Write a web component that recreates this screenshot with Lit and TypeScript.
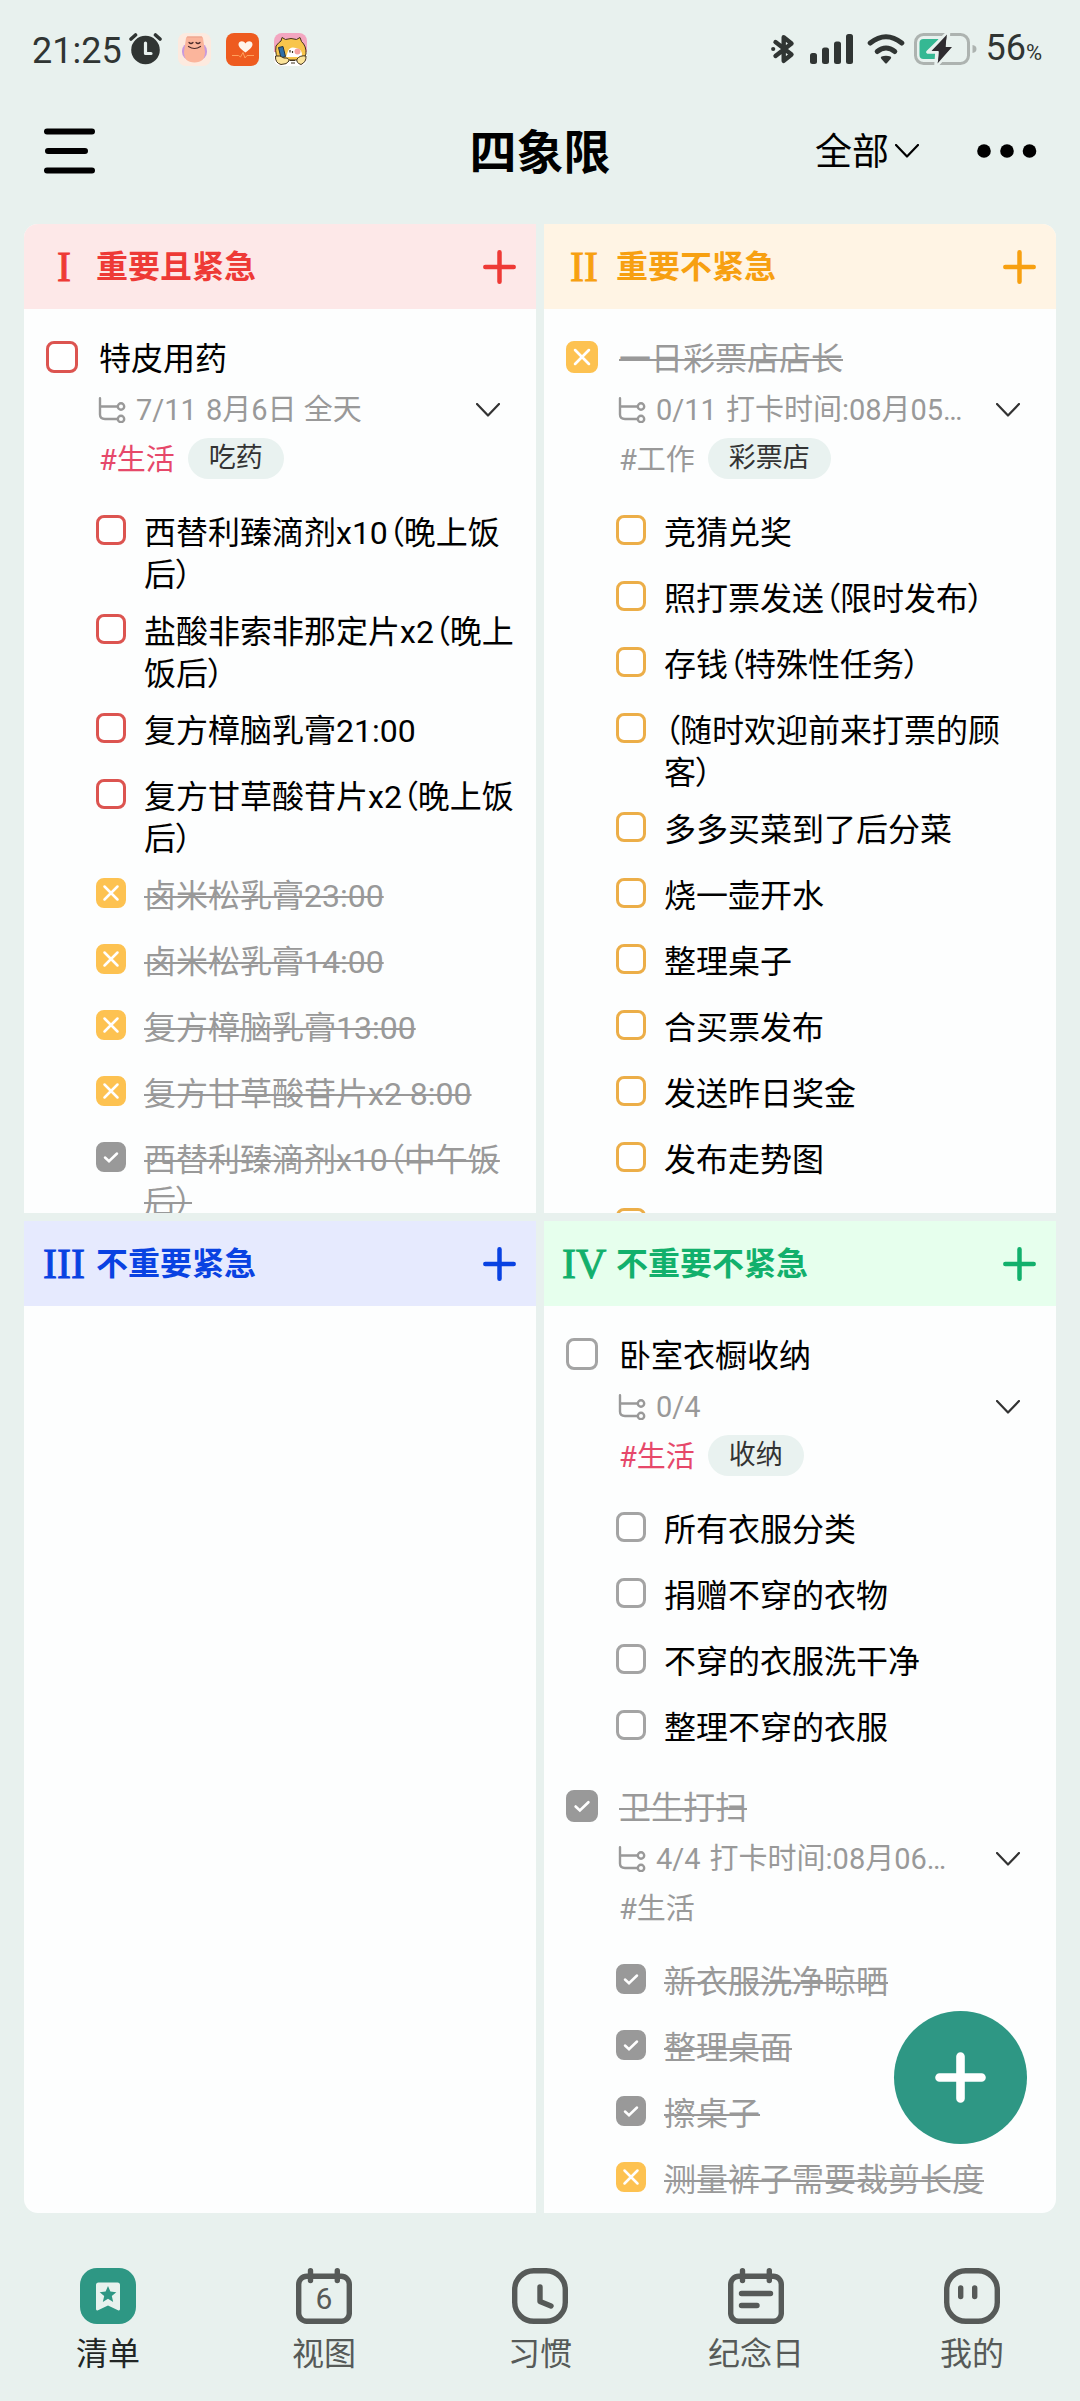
import { LitElement, html, svg, css, nothing } from "lit";
import { customElement, property } from "lit/decorators.js";
import { classMap } from "lit/directives/class-map.js";

type Mark = "open" | "dropped" | "done";

interface Item {
  text: string;
  mark?: Mark;
}

interface Task extends Item {
  count: string;
  when?: string;
  tag: string;
  pill?: string;
  items: Item[];
}

interface Quadrant {
  tone: "red" | "orange" | "blue" | "green";
  numeral: string;
  title: string;
  tasks: Task[];
}

const open = (...texts: string[]): Item[] => texts.map((text) => ({ text }));
const dropped = (...texts: string[]): Item[] => texts.map((text) => ({ text, mark: "dropped" }));
const done = (...texts: string[]): Item[] => texts.map((text) => ({ text, mark: "done" }));

const QUADRANTS: Quadrant[] = [
  {
    tone: "red",
    numeral: "I",
    title: "重要且紧急",
    tasks: [
      {
        text: "特皮用药",
        count: "7/11",
        when: "8月6日 全天",
        tag: "#生活",
        pill: "吃药",
        items: [
          ...open(
            "西替利臻滴剂x10（晚上饭后）",
            "盐酸非索非那定片x2（晚上饭后）",
            "复方樟脑乳膏21:00",
            "复方甘草酸苷片x2（晚上饭后）"
          ),
          ...dropped(
            "卤米松乳膏23:00",
            "卤米松乳膏14:00",
            "复方樟脑乳膏13:00",
            "复方甘草酸苷片x2 8:00"
          ),
          ...done("西替利臻滴剂x10（中午饭后）"),
        ],
      },
    ],
  },
  {
    tone: "orange",
    numeral: "II",
    title: "重要不紧急",
    tasks: [
      {
        text: "一日彩票店店长",
        mark: "dropped",
        count: "0/11",
        when: "打卡时间:08月05…",
        tag: "#工作",
        pill: "彩票店",
        items: open(
          "竞猜兑奖",
          "照打票发送（限时发布）",
          "存钱（特殊性任务）",
          "（随时欢迎前来打票的顾客）",
          "多多买菜到了后分菜",
          "烧一壶开水",
          "整理桌子",
          "合买票发布",
          "发送昨日奖金",
          "发布走势图",
          ""
        ),
      },
    ],
  },
  { tone: "blue", numeral: "III", title: "不重要紧急", tasks: [] },
  {
    tone: "green",
    numeral: "IV",
    title: "不重要不紧急",
    tasks: [
      {
        text: "卧室衣橱收纳",
        count: "0/4",
        tag: "#生活",
        pill: "收纳",
        items: open("所有衣服分类", "捐赠不穿的衣物", "不穿的衣服洗干净", "整理不穿的衣服"),
      },
      {
        text: "卫生打扫",
        mark: "done",
        count: "4/4",
        when: "打卡时间:08月06…",
        tag: "#生活",
        items: [
          ...done("新衣服洗净晾晒", "整理桌面", "擦桌子"),
          ...dropped("测量裤子需要裁剪长度"),
        ],
      },
    ],
  },
];

const chevron = html`<svg class="icon" width="24" height="14" viewBox="0 0 24 14" aria-hidden="true">
  <path d="M1 1 12 12.500 23 1" fill="none" stroke="currentColor" stroke-width="2.200" stroke-linecap="round" stroke-linejoin="round" />
</svg>`;

const shared = css`
  * {
    box-sizing: border-box;
  }
  button {
    margin: 0;
    padding: 0;
    border: 0;
    background: none;
    color: inherit;
    font: inherit;
    cursor: pointer;
  }
  .icon {
    display: block;
    flex: none;
  }
`;

@customElement("quadrant-panel")
export class QuadrantPanel extends LitElement {
  @property({ attribute: false }) data!: Quadrant;

  static styles = [
    shared,
    css`
      :host {
        display: flex;
        flex-direction: column;
        min-width: 0;
        min-height: 0;
        overflow: hidden;
        background: #fdfefe;
      }
      .red {
        --tone: #ee3a36;
        --tint: #fde8e8;
        --edge: #dc5450;
      }
      .orange {
        --tone: #f7a011;
        --tint: #fff4e4;
        --edge: #ecae48;
      }
      .blue {
        --tone: #0942e2;
        --tint: #e6eafe;
        --edge: #0942e2;
      }
      .green {
        --tone: #12b06c;
        --tint: #e6ffed;
        --edge: #a4a4a4;
      }
      .head {
        display: flex;
        align-items: center;
        flex: none;
        height: 85px;
        padding: 0 20px 0 18px;
        background: var(--tint);
        color: var(--tone);
      }
      .numeral {
        width: 44px;
        margin-right: 10px;
        text-align: center;
        font: 42px/48px "Liberation Serif", serif;
        -webkit-text-stroke: 1px currentColor;
        white-space: nowrap;
      }
      h2 {
        flex: 1;
        margin: 0;
        font-size: 32px;
        line-height: 42px;
        font-weight: 700;
      }
      .body {
        flex: 1;
        min-height: 0;
        overflow: hidden;
        padding: 29px 0 0 22px;
      }
      .task + .task {
        margin-top: 14px;
      }
      .row {
        display: flex;
        align-items: flex-start;
        font-size: 32px;
        line-height: 42px;
        color: #000;
        cursor: pointer;
      }
      .title {
        gap: 21px;
      }
      .box {
        display: grid;
        flex: none;
        width: 30px;
        height: 30px;
        margin-top: 3px;
      }
      .title .box {
        width: 32px;
        height: 32px;
      }
      .box > * {
        grid-area: 1 / 1;
        width: 100%;
        height: 100%;
      }
      input {
        appearance: none;
        margin: 0;
        border: 3px solid var(--edge);
        border-radius: 8px;
        background: #fff;
      }
      .dropped input {
        border-color: #fdc251;
        background: #fdc251;
      }
      .done input {
        border-color: #999;
        background: #999;
      }
      .tick {
        pointer-events: none;
      }
      .dropped .label,
      .done .label {
        color: #999;
        text-decoration: line-through 2px;
      }
      .meta {
        display: flex;
        align-items: center;
        height: 40px;
        margin-top: 10px;
        padding: 0 36px 0 52px;
        font-size: 29px;
        line-height: 40px;
        color: #999;
        white-space: nowrap;
      }
      .count {
        margin: 0 9px 0 10px;
      }
      .when {
        flex: 1;
        min-width: 0;
        overflow: hidden;
        text-overflow: ellipsis;
      }
      .fold {
        display: flex;
        align-items: center;
        height: 40px;
        color: #333;
      }
      .tags {
        display: flex;
        align-items: center;
        gap: 13px;
        height: 41px;
        margin-top: 8px;
        padding-left: 53px;
        font-size: 29px;
        line-height: 41px;
        color: #e6486a;
      }
      .tags.muted {
        color: #999;
      }
      .tag {
        padding-top: 4px;
      }
      .pill {
        padding: 0 21px;
        border-radius: 21px;
        background: #e9f2f0;
        color: #333;
        font-size: 27px;
        line-height: 41px;
      }
      ul {
        margin: 33px 0 0;
        padding: 0 14px 0 50px;
        list-style: none;
      }
      li {
        min-height: 66px;
        padding-bottom: 15px;
      }
      li .row {
        gap: 18px;
      }
      li .label {
        flex: 1;
        font-feature-settings: "palt";
      }
    `,
  ];

  private row(item: Item, title = false) {
    const mark = item.mark ?? "open";
    return html`<label class=${classMap({ row: true, title, [mark]: true })}>
      <span class="box">
        <input type="checkbox" .checked=${mark !== "open"} />
        ${mark === "open"
          ? nothing
          : html`<svg class="tick" viewBox="0 0 30 30" aria-hidden="true">
              <path
                d=${mark === "done" ? "M9 15.500 13 19.200 21 11.500" : "M8.500 8.500 21.500 21.500M21.500 8.500 8.500 21.500"}
                fill="none"
                stroke="#fff"
                stroke-width="2.500"
                stroke-linecap="round"
              />
            </svg>`}
      </span>
      <span class="label">${item.text}</span>
    </label>`;
  }

  private task(task: Task) {
    return html`<article class="task">
      ${this.row(task, true)}
      <div class="meta">
        <svg class="icon" width="28" height="26" viewBox="0 0 28 26" aria-hidden="true">
          <g fill="none" stroke="currentColor" stroke-width="2.400" stroke-linecap="round">
            <path d="M2 1.200V17.500Q2 22 7 22H19.500M2 9.500H19.500" />
            <circle cx="23" cy="9.500" r="3.200" />
            <circle cx="23" cy="22" r="3.200" />
          </g>
        </svg>
        <span class="count">${task.count}</span>
        <span class="when">${task.when ?? nothing}</span>
        <button class="fold" aria-label="折叠">${chevron}</button>
      </div>
      <div class=${classMap({ tags: true, muted: !!task.mark })}>
        <span class="tag">${task.tag}</span>
        ${task.pill ? html`<span class="pill">${task.pill}</span>` : nothing}
      </div>
      <ul>
        ${task.items.map((item) => html`<li>${this.row(item)}</li>`)}
      </ul>
    </article>`;
  }

  render() {
    const { tone, numeral, title, tasks } = this.data;
    return html`
      <header class="head ${tone}">
        <span class="numeral">${numeral}</span>
        <h2>${title}</h2>
        <button aria-label="添加">
          <svg class="icon" width="33" height="34" viewBox="0 0 33 34">
            <path d="M16.500 2.300V31.700M2.300 17H30.700" stroke="currentColor" stroke-width="4.500" stroke-linecap="round" />
          </svg>
        </button>
      </header>
      <div class="body ${tone}">${tasks.map((task) => this.task(task))}</div>
    `;
  }
}

const calendarFrame = svg`
  <rect x="2.700" y="8.200" width="50.600" height="45.100" rx="8" />
  <path d="M14.500 2.700V12.500M41.300 2.700V12.500" />`;

const NAV = [
  {
    label: "清单",
    icon: svg`<rect width="56" height="56" rx="17" fill="#2e9784" />
      <path d="M18.500 14.500H37.500Q40 14.500 40 17V41Q40 43 38 42.200L28 37.500 18 42.200Q16 43 16 41V17Q16 14.500 18.500 14.500Z" fill="#e8f2ee" />
      <path d="M28 18 30.400 23.600 36.300 24.200 31.800 28.100 33.200 34 28 30.800 22.800 34 24.200 28.100 19.700 24.200 25.600 23.600Z" fill="#2e9784" />`,
  },
  {
    label: "视图",
    icon: svg`<g class="line">${calendarFrame}</g>
      <text class="day" x="28" y="41" text-anchor="middle">6</text>`,
  },
  {
    label: "习惯",
    icon: svg`<g class="line"><rect x="2.700" y="2.700" width="50.600" height="50.600" rx="19" />
      <path d="M28 19V33.500L39 38" /></g>`,
  },
  {
    label: "纪念日",
    icon: svg`<g class="line">${calendarFrame}<path d="M13.500 25.500H42.500M13.500 37.500H29" /></g>`,
  },
  {
    label: "我的",
    icon: svg`<g class="line"><rect x="2.700" y="2.700" width="50.600" height="50.600" rx="19" />
      <path d="M16.700 20V28.500M30.700 20V28.500" /></g>`,
  },
];

@customElement("app-root")
export class AppRoot extends LitElement {
  static styles = [
    shared,
    css`
      :host {
        display: flex;
        flex-direction: column;
        height: 100vh;
        background: #e8f1ee;
        color: #000;
        font-family: Roboto, "Noto Sans CJK SC", sans-serif;
      }
      .status {
        display: flex;
        align-items: center;
        justify-content: space-between;
        flex: none;
        height: 98px;
        padding: 0 38px 0 32px;
        color: #303533;
        font-size: 36px;
        line-height: 42px;
      }
      .side {
        display: flex;
        align-items: center;
      }
      .apps {
        display: flex;
        gap: 15px;
        margin-left: 16px;
      }
      .clock,
      .charge {
        padding-top: 3px;
      }
      .clock {
        margin-right: 7px;
      }
      .signal {
        margin: 0 14px 0 15px;
      }
      .battery {
        margin: 0 8px 0 9px;
      }
      .percent {
        font-size: 22px;
      }
      .bar {
        display: grid;
        grid-template-columns: 1fr auto 1fr;
        align-items: center;
        flex: none;
        height: 106px;
        padding: 0 43px 0 43px;
      }
      .menu {
        justify-self: start;
      }
      h1 {
        margin: 0;
        padding-top: 4px;
        font-size: 47px;
        line-height: 60px;
        font-weight: 700;
      }
      .actions {
        display: flex;
        align-items: center;
        justify-self: end;
        gap: 58px;
      }
      .filter {
        display: flex;
        align-items: center;
        gap: 6px;
        font-size: 37px;
        line-height: 48px;
      }
      .filter span {
        padding-top: 4px;
      }
      .board {
        position: relative;
        display: grid;
        flex: 1;
        min-height: 0;
        grid-template-columns: repeat(2, minmax(0, 1fr));
        grid-template-rows: minmax(0, 989fr) minmax(0, 992fr);
        gap: 8px;
        margin: 20px 24px 0;
      }
      quadrant-panel:nth-of-type(1) {
        border-top-left-radius: 14px;
      }
      quadrant-panel:nth-of-type(2) {
        border-top-right-radius: 14px;
      }
      quadrant-panel:nth-of-type(3) {
        border-bottom-left-radius: 14px;
      }
      quadrant-panel:nth-of-type(4) {
        border-bottom-right-radius: 14px;
      }
      .fab {
        position: absolute;
        right: 29px;
        bottom: 69px;
        display: grid;
        place-items: center;
        width: 133px;
        height: 133px;
        border-radius: 50%;
        background: #2e9784;
        color: #fff;
      }
      nav {
        display: grid;
        grid-template-columns: repeat(5, 1fr);
        flex: none;
        padding: 55px 0 27px;
      }
      nav a {
        display: flex;
        flex-direction: column;
        align-items: center;
        gap: 10px;
        color: #565a58;
        font-size: 32px;
        line-height: 40px;
        text-decoration: none;
      }
      nav a.current {
        color: #222625;
      }
      .line {
        fill: none;
        stroke: currentColor;
        stroke-width: 5.400;
        stroke-linecap: round;
        stroke-linejoin: round;
      }
      .day {
        fill: currentColor;
        font-size: 30px;
      }
    `,
  ];

  private statusBar() {
    return html`<div class="status">
      <div class="side">
        <span class="clock">21:25</span>
        <svg class="icon" width="33" height="32" viewBox="0 0 33 32" aria-hidden="true">
          <circle cx="16.500" cy="17" r="14.300" fill="currentColor" />
          <path d="M2 6 6.500 2M31 6 26.500 2" stroke="currentColor" stroke-width="3.600" stroke-linecap="round" />
          <path d="M16.500 10V20.500H22" fill="none" stroke="#e8f1ee" stroke-width="3.200" stroke-linecap="round" stroke-linejoin="round" />
        </svg>
        <div class="apps">
          <svg class="icon" width="33" height="33" viewBox="0 0 33 33" aria-hidden="true">
            <rect width="33" height="33" rx="8" fill="#fdeadf" />
            <rect x="4" y="10" width="25" height="17" rx="8" fill="#c79adf" />
            <path d="M8 5Q8 3.500 10 3.500H23Q25 3.500 25 5L27 19Q27 29.500 16.500 29.500T6 19Z" fill="#fbb59c" />
            <path d="M9 4H24" stroke="#e9a08a" stroke-width="1" />
            <path d="M11 9.500Q13 11.500 15 9.500M18 9.500Q20 11.500 22 9.500M10.500 13.500Q16.500 17.500 22.500 13.500" fill="none" stroke="#4a2a2a" stroke-width="1.200" stroke-linecap="round" />
          </svg>
          <svg class="icon" width="33" height="33" viewBox="0 0 33 33" aria-hidden="true">
            <rect width="33" height="33" rx="8" fill="#ee5b1f" />
            <path d="M19.500 19.500C14.500 16 12.500 13.500 12.500 11.500C12.500 8 17.500 7 19.500 10.500C21.500 7 26.500 8 26.500 11.500C26.500 13.500 24.500 16 19.500 19.500Z" fill="#fff5ea" />
            <path d="M6 22.500H12.500L14.500 24 17 19.500 19 25 21 22.500H28" fill="none" stroke="#ffa05c" stroke-width="1" />
          </svg>
          <svg class="icon" width="33" height="33" viewBox="0 0 33 33" aria-hidden="true">
            <rect width="33" height="33" rx="8" fill="#f3a6c0" />
            <path d="M0 19H33V25Q33 33 25 33H8Q0 33 0 25Z" fill="#fff" />
            <path d="M2 13Q5 9 7 8L8 4.500 11.500 6.500Q17 4.500 22.500 6.500L26 4.500 27.500 8.500Q32.500 13 32 21Q31 25 27 27H6Q0.500 23 2 13Z" fill="#f8c54c" stroke="#40331f" stroke-width="1" />
            <path d="M14 18Q16 13 22 15Q29 16 28 24H12Z" fill="#fff" />
            <circle cx="23.500" cy="18.500" r="3" fill="#f6a3a0" />
            <path d="M4.500 14.500 9 13.500 11.500 23.500 7 25Z" fill="#2e6fa8" stroke="#26333f" stroke-width="1" />
            <path d="M16 17V19.500M18.500 18V20" stroke="#40331f" stroke-width="1.200" />
            <path d="M1.500 23Q6 22 10 25Q15 24.500 15 28Q13 31.500 7 31.500Q1 30 1.500 23ZM32 23Q26 22 23 26Q22 30 27 31.500Q32.500 29 32 23Z" fill="#fbe39a" stroke="#40331f" stroke-width="1" />
            <path d="M16 27.500H21M17 30H21" stroke="#40331f" stroke-width="1" />
          </svg>
        </div>
      </div>
      <div class="side">
        <svg class="icon" width="24" height="30" viewBox="0 0 24 30" aria-hidden="true">
          <path d="M4.500 8 20.500 20.500 12.700 26.800V3.200L20.500 9.500 4.500 22" fill="none" stroke="currentColor" stroke-width="4.400" stroke-linecap="round" stroke-linejoin="round" />
          <circle cx="2.200" cy="15" r="2.100" fill="currentColor" />
        </svg>
        <svg class="icon signal" width="43" height="30" viewBox="0 0 43 30" aria-hidden="true">
          <g fill="currentColor">
            <rect y="19" width="7" height="11" rx="2.500" />
            <rect x="12" y="13.500" width="7" height="16.500" rx="2.500" />
            <rect x="24" y="7.500" width="7" height="22.500" rx="2.500" />
            <rect x="36" width="7" height="30" rx="2.500" />
          </g>
        </svg>
        <svg class="icon" width="38" height="30" viewBox="0 0 38 30" aria-hidden="true">
          <g fill="none" stroke="currentColor" stroke-width="5" stroke-linecap="round">
            <path d="M3.200 9Q19-3.500 34.800 9" />
            <path d="M10.200 17.500Q19 10.500 27.800 17.500" />
          </g>
          <path d="M14.500 22.500Q19 21 23.500 22.500Q25 23.500 23.500 25L20 29Q19 30 18 29L14.500 25Q13 23.500 14.500 22.500Z" fill="currentColor" />
        </svg>
        <svg class="icon battery" width="63" height="34" viewBox="0 0 63 34" aria-hidden="true">
          <rect x="1.500" y="2.500" width="53" height="29" rx="8" fill="none" stroke="#adb3b0" stroke-width="3" />
          <path d="M58.500 13Q62.500 13.500 62.500 17T58.500 21Z" fill="#adb3b0" />
          <path d="M9.500 7H24.500V27H9.500Q5.500 27 5.500 23V11Q5.500 7 9.500 7Z" fill="#35b893" />
          <path d="M34.500 0 14 20H23L22 34 40.500 14.500H33.500Z" fill="#2f2c30" stroke="#e8f1ee" stroke-width="3.600" stroke-linejoin="round" />
          <path d="M33 2.500 17.500 19H26L23.500 31.500 38 15H31Z" fill="#2f2c30" />
        </svg>
        <span class="charge">56<span class="percent">%</span></span>
      </div>
    </div>`;
  }

  render() {
    return html`
      ${this.statusBar()}
      <header class="bar">
        <button class="menu" aria-label="菜单">
          <svg class="icon" width="52" height="48" viewBox="0 0 52 48">
            <path d="M4 4.500H49M5 24H42M4 43.500H49" stroke="currentColor" stroke-width="6" stroke-linecap="round" />
          </svg>
        </button>
        <h1>四象限</h1>
        <div class="actions">
          <button class="filter"><span>全部</span>${chevron}</button>
          <button aria-label="更多">
            <svg class="icon" width="60" height="14" viewBox="0 0 60 14">
              <g fill="currentColor"><circle cx="7" cy="7" r="6.800" /><circle cx="30" cy="7" r="6.800" /><circle cx="52.500" cy="7" r="6.800" /></g>
            </svg>
          </button>
        </div>
      </header>
      <main class="board">
        ${QUADRANTS.map((data) => html`<quadrant-panel .data=${data}></quadrant-panel>`)}
        <button class="fab" aria-label="新建">
          <svg class="icon" width="51" height="51" viewBox="0 0 51 51">
            <path d="M25.500 4.500V46.500M4.500 25.500H46.500" stroke="currentColor" stroke-width="8.600" stroke-linecap="round" />
          </svg>
        </button>
      </main>
      <nav>
        ${NAV.map(
          ({ label, icon }, i) => html`<a href="#${label}" class=${classMap({ current: i === 0 })}>
            <svg class="icon" width="56" height="56" viewBox="0 0 56 56" aria-hidden="true">${icon}</svg>
            <span>${label}</span>
          </a>`
        )}
      </nav>
    `;
  }
}
